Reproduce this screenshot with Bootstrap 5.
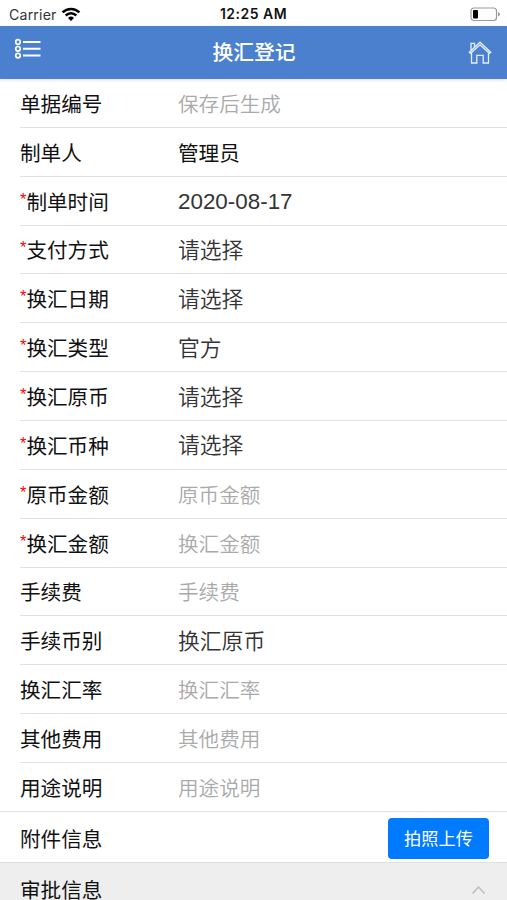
<!DOCTYPE html>
<html lang="zh-CN">
<head>
<meta charset="utf-8">
<meta name="viewport" content="width=device-width, initial-scale=1">
<title>换汇登记</title>
<link href="https://cdn.jsdelivr.net/npm/bootstrap@5.3.0/dist/css/bootstrap.min.css" rel="stylesheet">
<style>
body { font-family: "Liberation Sans", "Noto Sans CJK SC", sans-serif; color: #111; font-size: 20.6px; line-height: 1.2; height: 900px; }
.status-bar { height: 25.5px; font-family: Inter, sans-serif; font-size: 14.2px; padding: 3px 9px 0 9px; }
.status-bar .carrier { color: #333; letter-spacing: .15px; }
.clock { font-size: 14px; letter-spacing: .5px; color: #111; }
.battery { margin-right: -3px; }
.title-bar { height: 53.6px; background: #4a80cd; padding: 0 15px 0 14px; box-shadow: 0 1px 3px rgba(60,80,120,.18); }
.page-title { font-size: 20.8px; font-weight: 500; padding: 2px 2px 0 0; }
.menu-icon { margin-bottom: 7px; }
.field { height: 48.85px; margin-left: 20px; padding-top: 4.6px; border-bottom: 1px solid #e0e0e0; }
.field:last-child { margin-left: 0; padding-left: 20px; }
.field-name { width: 158px; }
.req { color: #f00; font-size: 16.5px; line-height: 1; margin-top: 0; width: 6.4px; }
.hint { color: #aaa; font-weight: 350; }
.pick { color: #333; font-size: 21.8px; font-weight: 350; padding-bottom: 1.5px; }
.date { font-size: 22.4px; }
.attach { height: 50.4px; padding: 3px 18px 0 20px; }
.attach-name { padding-top: 3px; }
.upload { width: 101px; height: 41px; font-size: 17.2px; background: #007aff; border-radius: 4px; --bs-btn-padding-x: 0; --bs-btn-padding-y: 0; border: 0; padding-top: 3px; }
.approval { height: 60px; background: #eee; border-top: 1px solid #e0e0e0; padding: 15.5px 21px 0 20px; }
.chevron { margin-top: 6px; }
</style>
<script src="https://cdn.jsdelivr.net/npm/bootstrap@5.3.0/dist/js/bootstrap.bundle.min.js"></script>
</head>
<body class="bg-white overflow-hidden">
<div class="status-bar row g-0 align-items-center">
  <div class="col d-flex align-items-center gap-1">
    <span class="carrier">Carrier</span>
    <svg width="20" height="15" viewBox="0 0 20 15" fill="none" stroke="#000" stroke-width="2.5"><path d="M1.6 5.4a12 12 0 0 1 16.8 0M4.7 8.5a7.6 7.6 0 0 1 10.6 0"/><path d="M10 14 7 11a4.4 4.4 0 0 1 6 0z" fill="#000" stroke="none"/></svg>
  </div>
  <div class="col-auto clock fw-semibold">12:25 AM</div>
  <div class="col d-flex justify-content-end">
    <svg class="battery" width="31" height="15" viewBox="0 0 31 15"><rect x="1" y="1" width="25.5" height="12.5" rx="3" fill="#fff" stroke="#999" stroke-width="1.2"/><rect x="3" y="3" width="5" height="8.5" rx="1" fill="#000"/><path d="M28 5v4.5q2-.8 2-2.25T28 5" fill="#999"/></svg>
  </div>
</div>
<header class="title-bar d-flex align-items-center justify-content-between position-relative text-white">
  <svg class="menu-icon" width="28" height="22" viewBox="0 0 28 22" fill="none" stroke="#fff"><g stroke-width="1.7"><circle cx="4" cy="4" r="2.3"/><circle cx="4" cy="10.8" r="2.3"/><circle cx="4" cy="17.6" r="2.3"/></g><path d="M9 4h17.5M9 10.8h17.5M9 17.6h17.5" stroke-width="2"/></svg>
  <h1 class="page-title mb-0">换汇登记</h1>
  <svg width="24" height="24" viewBox="0 0 24 24" fill="none" stroke="#e3eeff" stroke-width="1.3"><path d="M1.3 12.2 12 2.2l10.7 10-1.3 1.1L12 4.8l-9.4 8.5zM3.5 12.6V23h5.3v-7.6h6.4V23h5.3V12.6M3 10V3.4h3.5v3.2"/></svg>
</header>
<main>
  <section id="fields">
    <div class="field d-flex align-items-center"><div class="field-name d-flex">单据编号</div><div class="hint">保存后生成</div></div>
    <div class="field d-flex align-items-center"><div class="field-name d-flex">制单人</div><div>管理员</div></div>
    <div class="field d-flex align-items-center"><div class="field-name d-flex"><span class="req">*</span>制单时间</div><div class="pick date">2020-08-17</div></div>
    <div class="field d-flex align-items-center"><div class="field-name d-flex"><span class="req">*</span>支付方式</div><div class="pick">请选择</div></div>
    <div class="field d-flex align-items-center"><div class="field-name d-flex"><span class="req">*</span>换汇日期</div><div class="pick">请选择</div></div>
    <div class="field d-flex align-items-center"><div class="field-name d-flex"><span class="req">*</span>换汇类型</div><div class="pick">官方</div></div>
    <div class="field d-flex align-items-center"><div class="field-name d-flex"><span class="req">*</span>换汇原币</div><div class="pick">请选择</div></div>
    <div class="field d-flex align-items-center"><div class="field-name d-flex"><span class="req">*</span>换汇币种</div><div class="pick">请选择</div></div>
    <div class="field d-flex align-items-center"><div class="field-name d-flex"><span class="req">*</span>原币金额</div><div class="hint">原币金额</div></div>
    <div class="field d-flex align-items-center"><div class="field-name d-flex"><span class="req">*</span>换汇金额</div><div class="hint">换汇金额</div></div>
    <div class="field d-flex align-items-center"><div class="field-name d-flex">手续费</div><div class="hint">手续费</div></div>
    <div class="field d-flex align-items-center"><div class="field-name d-flex">手续币别</div><div class="pick">换汇原币</div></div>
    <div class="field d-flex align-items-center"><div class="field-name d-flex">换汇汇率</div><div class="hint">换汇汇率</div></div>
    <div class="field d-flex align-items-center"><div class="field-name d-flex">其他费用</div><div class="hint">其他费用</div></div>
    <div class="field d-flex align-items-center"><div class="field-name d-flex">用途说明</div><div class="hint">用途说明</div></div>
  </section>
  <section class="attach d-flex align-items-center justify-content-between">
    <span class="attach-name">附件信息</span>
    <button type="button" class="btn btn-primary upload">拍照上传</button>
  </section>
  <section class="approval d-flex align-items-start justify-content-between">
    <span>审批信息</span>
    <svg class="chevron" width="15" height="10" viewBox="0 0 15 10" fill="none" stroke="#bbb" stroke-width="1.5"><path d="m1.5 8.5 6-6.5 6 6.5"/></svg>
  </section>
</main>
</body>
</html>
